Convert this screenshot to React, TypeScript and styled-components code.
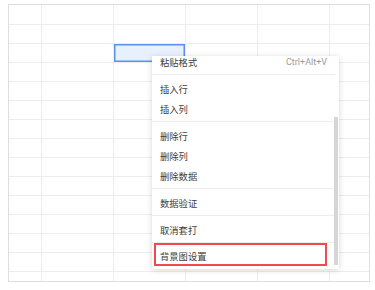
import React, { useLayoutEffect, useRef } from "react";
import styled, { createGlobalStyle } from "styled-components";

const GlobalStyle = createGlobalStyle`
  html, body {
    margin: 0;
    padding: 0;
    background: #ffffff;
  }
  body {
    font-family: "Noto Sans CJK SC", Roboto, "Liberation Sans", sans-serif;
  }
`;

const COLS = [33, 72, 72, 72, 72, 39];
const ROWS = 15;

type MenuEntry =
  | { kind: "item"; label: string; shortcut?: string; marked?: boolean }
  | { kind: "divider" };

const MENU: MenuEntry[] = [
  { kind: "item", label: "粘贴格式", shortcut: "Ctrl+Alt+V" },
  { kind: "divider" },
  { kind: "item", label: "插入行" },
  { kind: "item", label: "插入列" },
  { kind: "divider" },
  { kind: "item", label: "删除行" },
  { kind: "item", label: "删除列" },
  { kind: "item", label: "删除数据" },
  { kind: "divider" },
  { kind: "item", label: "数据验证" },
  { kind: "divider" },
  { kind: "item", label: "取消套打" },
  { kind: "divider" },
  { kind: "item", label: "背景图设置", marked: true },
];

export default function App() {
  const listRef = useRef<HTMLDivElement>(null);

  // the menu is scrolled down a little, first item is half hidden
  useLayoutEffect(() => {
    if (listRef.current) listRef.current.scrollTop = 8;
  }, []);

  return (
    <>
      <GlobalStyle />
      <Page>
        <Sheet>
          {Array.from({ length: ROWS }).map((_, r) =>
            COLS.map((_, c) => (
              <Cell key={`${r}-${c}`} $selected={r === 2 && c === 2} />
            ))
          )}
        </Sheet>

        <Menu>
          <List ref={listRef}>
            {MENU.map((entry, i) =>
              entry.kind === "divider" ? (
                <Divider key={i} />
              ) : (
                <Item key={i} $marked={entry.marked}>
                  <span>{entry.label}</span>
                  {entry.shortcut && <Shortcut>{entry.shortcut}</Shortcut>}
                </Item>
              )
            )}
            <Spacer />
          </List>
          <Thumb />
        </Menu>
      </Page>
    </>
  );
}

const Page = styled.div`
  position: relative;
  width: 375px;
  height: 290px;
  padding: 4px 0 0 8px;
  box-sizing: border-box;
  overflow: hidden;
`;

const Sheet = styled.div`
  display: grid;
  grid-template-columns: ${COLS.map((w) => `${w}px`).join(" ")};
  grid-template-rows: 20px;
  grid-auto-rows: 19px;
  width: 362px;
  height: 278px;
  box-sizing: border-box;
  border: 1px solid #dedede;
  overflow: hidden;
`;

const Cell = styled.div<{ $selected?: boolean }>`
  box-sizing: border-box;
  border-right: 1px solid #ededed;
  border-bottom: 1px solid #ededed;
  background: ${(p) => (p.$selected ? "#e9f0fd" : "transparent")};
  box-shadow: ${(p) => (p.$selected ? "inset 0 0 0 1.5px #5e90ef" : "none")};

  &:nth-child(6n) {
    border-right: none;
  }
`;

const Menu = styled.div`
  position: absolute;
  left: 152px;
  top: 56px;
  width: 187px;
  height: 213px;
  background: #ffffff;
  box-shadow: 0 1px 6px rgba(0, 0, 0, 0.16);
  overflow: hidden;
`;

const List = styled.div`
  height: 100%;
  box-sizing: border-box;
  padding: 4px 4px 0 0;
  overflow-y: scroll;
  scrollbar-width: none;

  &::-webkit-scrollbar {
    display: none;
  }
`;

const Item = styled.div<{ $marked?: boolean }>`
  display: flex;
  align-items: center;
  justify-content: space-between;
  box-sizing: border-box;
  height: ${(p) => (p.$marked ? "23px" : "20px")};
  margin: ${(p) => (p.$marked ? "-4px 8px 0 2px" : "0")};
  padding: ${(p) => (p.$marked ? "3px 6px 0 4px" : "0 8px")};
  border: ${(p) => (p.$marked ? "2px solid #ef4a4f" : "none")};
  font-size: 9.3px;
  color: #404040;
  white-space: nowrap;
`;

const Shortcut = styled.span`
  font-family: Roboto, "Liberation Sans", sans-serif;
  font-size: 9px;
  color: #9a9a9a;
`;

const Divider = styled.div`
  height: 1px;
  margin: 2px 0 4px;
  background: #ececec;
`;

const Spacer = styled.div`
  height: 30px;
`;

const Thumb = styled.div`
  position: absolute;
  right: 1px;
  top: 61px;
  width: 4px;
  height: 148px;
  background: #d6d6d6;
`;
